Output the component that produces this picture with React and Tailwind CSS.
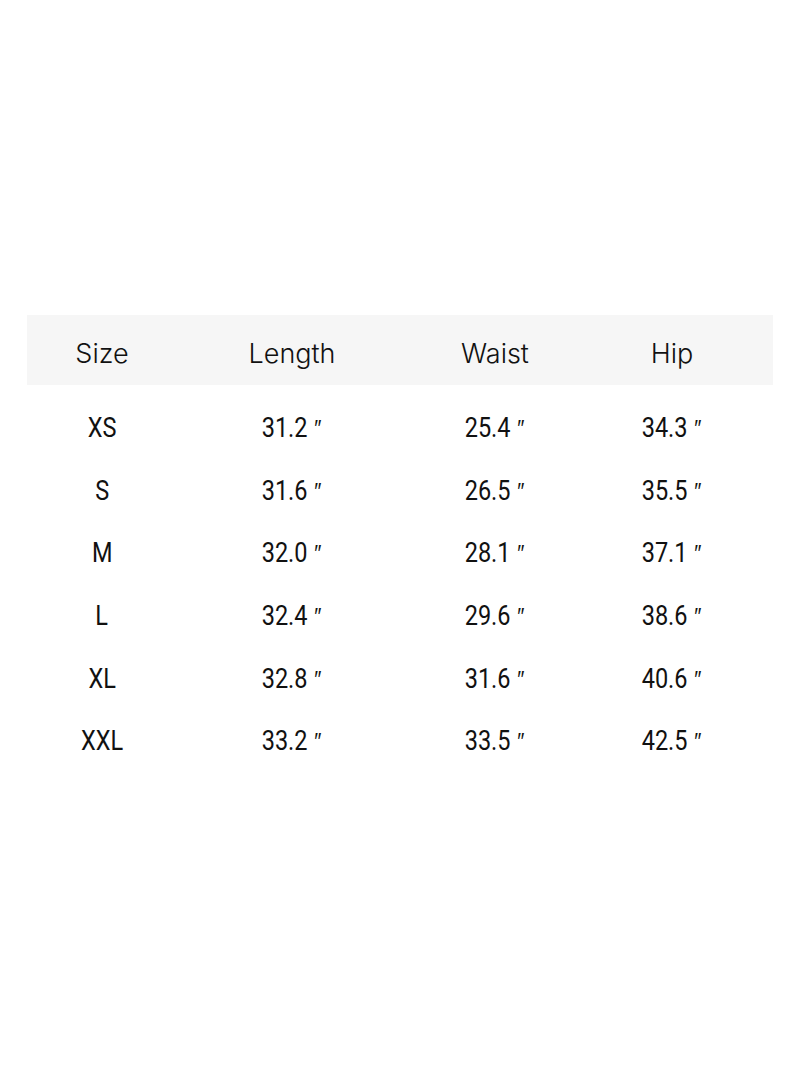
import React from "react";

const rows = [
  ["XS", "31.2", "25.4", "34.3"],
  ["S", "31.6", "26.5", "35.5"],
  ["M", "32.0", "28.1", "37.1"],
  ["L", "32.4", "29.6", "38.6"],
  ["XL", "32.8", "31.6", "40.6"],
  ["XXL", "33.2", "33.5", "42.5"],
];

const cols = "grid grid-cols-[150px_230px_176px_178px]";

// body font is a narrow one in the picture, squeeze Roboto to fit
const Cell = ({ value, inch }) => (
  <div className="text-center">
    <span className="inline-block scale-x-[0.84] whitespace-nowrap">
      {value}
      {inch && <span className="ml-[8px] font-['DejaVu_Sans',sans-serif] font-light text-[24px]">″</span>}
    </span>
  </div>
);

export default function App() {
  return (
    <div className="w-[800px] h-[1065px] bg-white pt-[315px] px-[27px] text-[#111]">
      {/* header band */}
      <div className={`${cols} h-[70px] items-center pt-[9px] bg-[#f6f6f6] text-[27px] font-['Inter',sans-serif] font-light`}>
        <div className="text-center">Size</div>
        <div className="text-center">Length</div>
        <div className="text-center">Waist</div>
        <div className="text-center">Hip</div>
      </div>

      {/* body rows */}
      <div className="pt-[12px] text-[28px] font-['Roboto',sans-serif]">
        {rows.map(r => (
          <div key={r[0]} className={`${cols} h-[62.6px] items-center`}>
            <Cell value={r[0]} />
            <Cell value={r[1]} inch />
            <Cell value={r[2]} inch />
            <Cell value={r[3]} inch />
          </div>
        ))}
      </div>
    </div>
  );
}
